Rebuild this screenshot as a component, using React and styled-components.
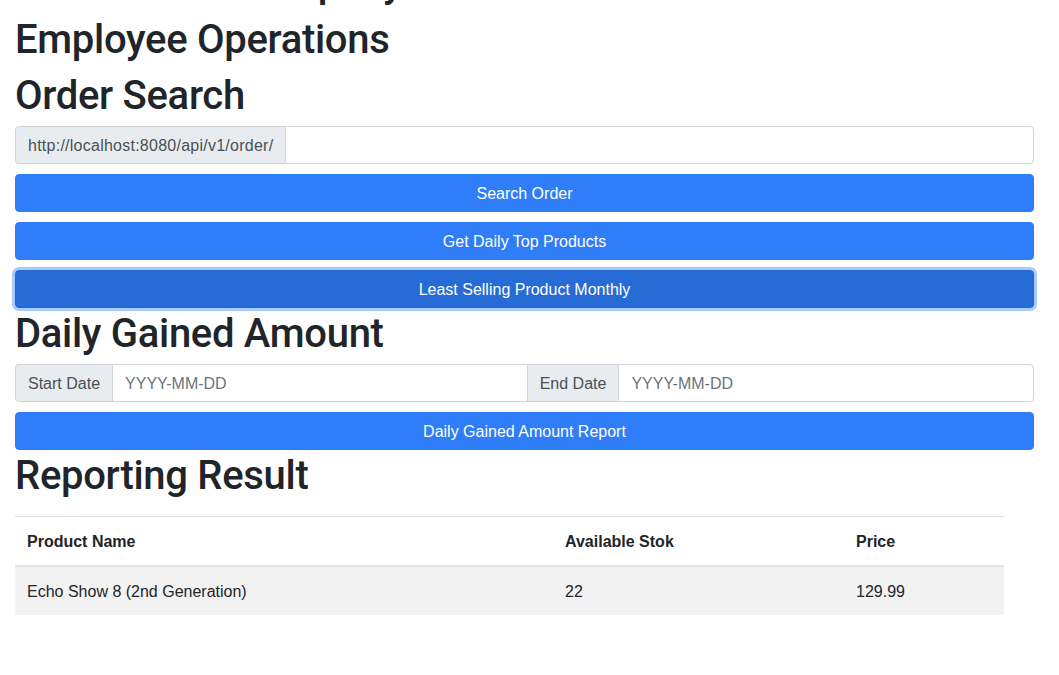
import React from "react";
import styled, { createGlobalStyle } from "styled-components";

const Global = createGlobalStyle`
  html, body { margin: 0; padding: 0; background: #fff; }
  body {
    font-family: "Liberation Sans", Arial, sans-serif;
    font-size: 16px;
    line-height: 1.5;
    color: #212529;
    overflow: hidden;
  }
  * { box-sizing: border-box; }
`;

const Page = styled.div`
  margin-top: -42px;
  padding: 0 25px 0 15px;
  display: flex;
  flex-direction: column;
`;

const Heading = styled.h1`
  margin: 0 0 6px;
  padding-top: 2px;
  font-family: Roboto, "Liberation Sans", Arial, sans-serif;
  font-size: 40px;
  line-height: 48px;
  font-weight: 500;
  letter-spacing: -0.3px;
  color: #212529;
`;

const InputGroup = styled.div`
  display: flex;
  height: 38px;
  margin-bottom: 10px;
`;

const Addon = styled.span`
  display: flex;
  align-items: center;
  padding: 1px 12px 0;
  background: #e9ecef;
  border: 1px solid #ced4da;
  color: #495057;
  font-size: 16px;
  letter-spacing: ${(p) => (p.$wide ? "0.25px" : "0")};
  white-space: nowrap;
  margin-left: ${(p) => (p.$joined ? "-1px" : "0")};
  border-radius: ${(p) => (p.$joined ? "0" : "4px 0 0 4px")};
`;

const Field = styled.input`
  flex: 1;
  min-width: 0;
  height: 38px;
  margin-left: -1px;
  padding: 7px 12px 5px;
  border: 1px solid #ced4da;
  border-radius: ${(p) => (p.$last ? "0 4px 4px 0" : "0")};
  font-family: inherit;
  font-size: 16px;
  color: #495057;
  background: #fff;
  outline: none;
  &::placeholder { color: #6c757d; }
`;

const Button = styled.button`
  display: block;
  width: 100%;
  height: 38px;
  margin: 0;
  padding: 7px 12px 5px;
  border: 1px solid ${(p) => (p.$focused ? "#2466d0" : "#2f7df8")};
  border-radius: 4px;
  background: ${(p) => (p.$focused ? "#276bd6" : "#2f7df8")};
  box-shadow: ${(p) => (p.$focused ? "0 0 0 3px #a9cafb" : "none")};
  color: #fff;
  font-family: inherit;
  font-size: 16px;
  line-height: 24px;
  text-align: center;
  cursor: pointer;
`;

const ButtonStack = styled.div`
  display: flex;
  flex-direction: column;
  gap: 10px;
`;

const Table = styled.table`
  width: calc(100% - 30px);
  margin-top: 10px;
  border-collapse: collapse;
  color: #212529;
  font-size: 16px;
`;

const Th = styled.th`
  text-align: left;
  font-weight: 700;
  padding: 13px 12px 11px;
  line-height: 24px;
  border-top: 1px solid #dee2e6;
  border-bottom: 2px solid #dee2e6;
  width: ${(p) => p.$w || "auto"};
`;

const Row = styled.tr`
  background: ${(p) => (p.$striped ? "#f2f2f2" : "transparent")};
`;

const Td = styled.td`
  padding: 13px 12px 11px;
  line-height: 24px;
  border-top: 1px solid #dee2e6;
`;

const rows = [
  { name: "Echo Show 8 (2nd Generation)", stock: 22, price: "129.99" },
];

export default function App() {
  return (
    <>
      <Global />
      <Page>
        <Heading>Ecommerce Company</Heading>
        <Heading>Employee Operations</Heading>
        <Heading>Order Search</Heading>
        <InputGroup>
          <Addon $wide>http://localhost:8080/api/v1/order/</Addon>
          <Field $last type="text" />
        </InputGroup>
        <ButtonStack>
          <Button>Search Order</Button>
          <Button>Get Daily Top Products</Button>
          <Button $focused>Least Selling Product Monthly</Button>
        </ButtonStack>
        <Heading>Daily Gained Amount</Heading>
        <InputGroup>
          <Addon>Start Date</Addon>
          <Field type="text" placeholder="YYYY-MM-DD" />
          <Addon $joined>End Date</Addon>
          <Field $last type="text" placeholder="YYYY-MM-DD" />
        </InputGroup>
        <ButtonStack>
          <Button>Daily Gained Amount Report</Button>
        </ButtonStack>
        <Heading>Reporting Result</Heading>
        <Table>
          <thead>
            <tr>
              <Th $w="538px">Product Name</Th>
              <Th $w="291px">Available Stok</Th>
              <Th>Price</Th>
            </tr>
          </thead>
          <tbody>
            {rows.map((r, i) => (
              <Row key={r.name} $striped={i % 2 === 0}>
                <Td>{r.name}</Td>
                <Td>{r.stock}</Td>
                <Td>{r.price}</Td>
              </Row>
            ))}
          </tbody>
        </Table>
      </Page>
    </>
  );
}
